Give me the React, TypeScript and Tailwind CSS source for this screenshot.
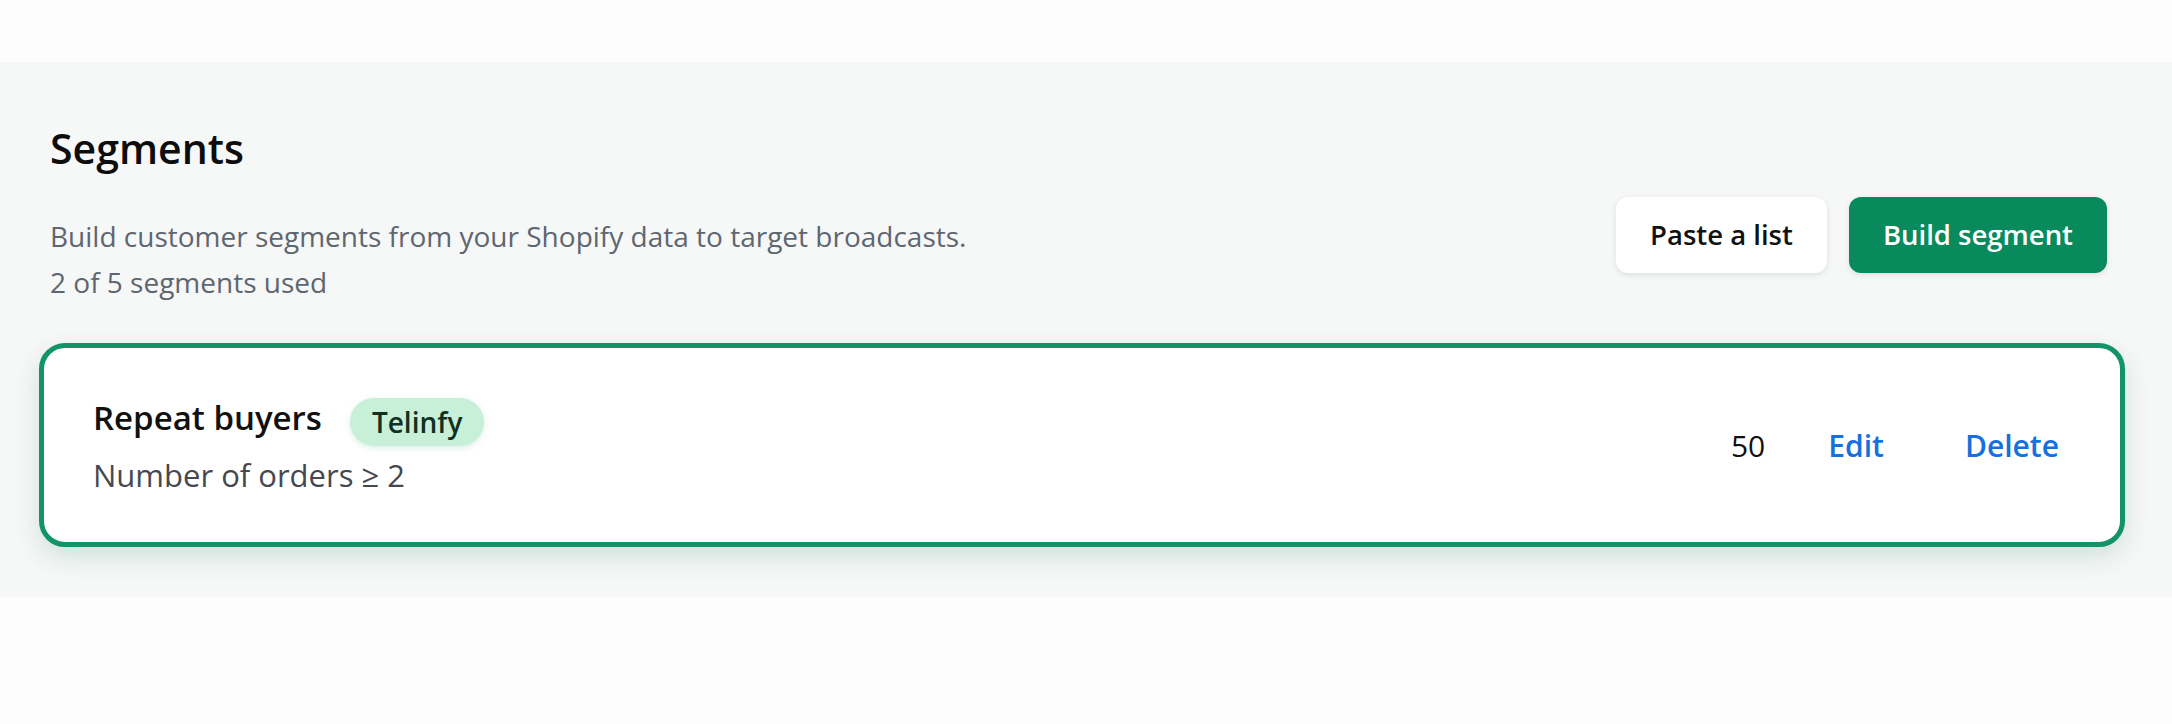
import React from "react";

const font = { fontFamily: '"Segoe UI", "Open Sans", "Noto Sans", sans-serif' };

function SegmentCard() {
  return (
    <div className="flex items-center justify-between rounded-[26px] border-[5px] border-[#12936a] bg-white pl-[49px] pr-[49px] h-[204px] shadow-[0_10px_24px_rgba(16,120,80,0.16)]">
      <div className="flex flex-col">
        <div className="flex items-center">
          <span className="mb-[8px] text-[33px] font-semibold text-[#111]">Repeat buyers</span>
          <span className="ml-[28px] rounded-full bg-[#c8f0d8] px-[22px] h-[48px] flex items-center text-[28px] font-semibold text-[#10311f] shadow-[0_2px_6px_rgba(60,170,110,0.18)]">
            Telinfy
          </span>
        </div>
        <div className="mt-[3px] text-[31px] leading-[44px] text-[#45494f]">Number of orders ≥ 2</div>
      </div>
      <div className="flex items-center text-[30px]">
        <span className="text-[#111]">50</span>
        <button className="ml-[63px] font-semibold text-[#1570e0]">Edit</button>
        <button className="ml-[81px] mr-[12px] font-semibold text-[#1570e0]">Delete</button>
      </div>
    </div>
  );
}

export default function App() {
  return (
    <div className="min-h-screen bg-[#fdfdfd]" style={font}>
      <div className="h-[62px]" />
      <section className="bg-[#f6f7f7] pl-[39px] pr-[47px] pt-[58px] pb-[50px]">
        <div className="flex justify-between pl-[11px] pr-[18px]">
          <div>
            <h1 className="text-[41px] font-semibold leading-[56px] text-[#0d0d0d]">Segments</h1>
            <p className="mt-[37px] text-[28px] leading-[46px] text-[#5e6670]">
              Build customer segments from your Shopify data to target broadcasts.
            </p>
            <p className="text-[28px] leading-[46px] text-[#5e6670]">2 of 5 segments used</p>
          </div>
          <div className="mt-[77px] flex gap-[22px]">
            <button className="h-[76px] rounded-[12px] bg-white px-[34px] text-[27.5px] font-semibold text-[#111] shadow-[0_2px_6px_rgba(0,0,0,0.1)]">
              Paste a list
            </button>
            <button className="h-[76px] rounded-[12px] bg-[#098a5c] px-[34px] text-[27.5px] font-semibold text-white shadow-[0_2px_6px_rgba(0,0,0,0.1)]">
              Build segment
            </button>
          </div>
        </div>
        <div className="mt-[38px]">
          <SegmentCard />
        </div>
      </section>
    </div>
  );
}
